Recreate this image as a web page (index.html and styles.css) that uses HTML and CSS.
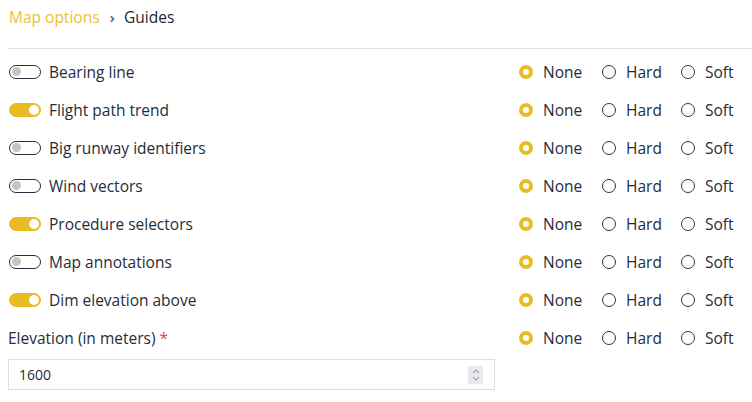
FILE: index.html
```html
<!DOCTYPE html>
<html>
<head>
<meta charset="utf-8">
<link rel="stylesheet" href="styles.css">
</head>
<body>
<nav class="crumbs"><span class="crumb-link">Map options</span><span class="crumb-sep">›</span><span class="crumb-cur">Guides</span></nav>
<hr class="divider">
<div class="list">
  <div class="row">
    <label class="toggle-label"><span class="toggle"></span>Bearing line</label>
    <div class="radios"><span class="opt"><span class="radio on"></span>None</span><span class="opt"><span class="radio"></span>Hard</span><span class="opt"><span class="radio"></span>Soft</span></div>
  </div>
  <div class="row">
    <label class="toggle-label"><span class="toggle active"></span>Flight path trend</label>
    <div class="radios"><span class="opt"><span class="radio on"></span>None</span><span class="opt"><span class="radio"></span>Hard</span><span class="opt"><span class="radio"></span>Soft</span></div>
  </div>
  <div class="row">
    <label class="toggle-label"><span class="toggle"></span>Big runway identifiers</label>
    <div class="radios"><span class="opt"><span class="radio on"></span>None</span><span class="opt"><span class="radio"></span>Hard</span><span class="opt"><span class="radio"></span>Soft</span></div>
  </div>
  <div class="row">
    <label class="toggle-label"><span class="toggle"></span>Wind vectors</label>
    <div class="radios"><span class="opt"><span class="radio on"></span>None</span><span class="opt"><span class="radio"></span>Hard</span><span class="opt"><span class="radio"></span>Soft</span></div>
  </div>
  <div class="row">
    <label class="toggle-label"><span class="toggle active"></span>Procedure selectors</label>
    <div class="radios"><span class="opt"><span class="radio on"></span>None</span><span class="opt"><span class="radio"></span>Hard</span><span class="opt"><span class="radio"></span>Soft</span></div>
  </div>
  <div class="row">
    <label class="toggle-label"><span class="toggle"></span>Map annotations</label>
    <div class="radios"><span class="opt"><span class="radio on"></span>None</span><span class="opt"><span class="radio"></span>Hard</span><span class="opt"><span class="radio"></span>Soft</span></div>
  </div>
  <div class="row">
    <label class="toggle-label"><span class="toggle active"></span>Dim elevation above</label>
    <div class="radios"><span class="opt"><span class="radio on"></span>None</span><span class="opt"><span class="radio"></span>Hard</span><span class="opt"><span class="radio"></span>Soft</span></div>
  </div>
  <div class="row field-row">
    <div class="field">
      <div class="field-label">Elevation (in meters) <span class="req">*</span></div>
      <div class="input"><span class="input-val">1600</span><span class="spin"><svg width="10" height="14" viewBox="0 0 10 14"><path d="M2 5 L5 2 L8 5" fill="none" stroke="#a3a3ad" stroke-width="1.2"/><path d="M2 9 L5 12 L8 9" fill="none" stroke="#a3a3ad" stroke-width="1.2"/></svg></span></div>
    </div>
    <div class="radios"><span class="opt"><span class="radio on"></span>None</span><span class="opt"><span class="radio"></span>Hard</span><span class="opt"><span class="radio"></span>Soft</span></div>
  </div>
</div>
</body>
</html>
```
FILE: styles.css
```css
html, body {
  margin: 0;
  padding: 0;
  background: #ffffff;
}
body {
  padding: 0 8px;
  font-family: "Open Sans", "Noto Sans", sans-serif;
  font-size: 15.5px;
  color: #252d3a;
  width: 736px;
}
.crumbs {
  display: flex;
  align-items: center;
  height: 34px;
  font-size: 15.5px;
  padding-left: 1px;
}
.crumb-link {
  color: #e8c235;
}
.crumb-sep {
  color: #6b7280;
  margin: 0 9px 0 10px;
  font-weight: 700;
  font-size: 15px;
}
.crumb-cur {
  color: #1f2633;
}
.divider {
  border: 0;
  border-top: 1px solid #e2e4e8;
  margin: 14px -8px 0 0;
  height: 0;
}
.list {
  padding-top: 4px;
}
.row {
  display: flex;
  justify-content: space-between;
  align-items: center;
  height: 38px;
}
.toggle-label {
  display: flex;
  align-items: center;
  gap: 8px;
  padding-left: 1px;
}
.toggle {
  position: relative;
  box-sizing: border-box;
  width: 32px;
  height: 14px;
  border: 1.6px solid #243040;
  border-radius: 7px;
  background: #fff;
}
.toggle::after {
  content: "";
  position: absolute;
  top: 1px;
  left: 2px;
  width: 9px;
  height: 9px;
  border-radius: 50%;
  background: #c4c4c4;
}
.toggle.active {
  background: #e8bc25;
  border-color: #e8bc25;
}
.toggle.active::after {
  left: auto;
  right: 1px;
  top: 0.5px;
  width: 10px;
  height: 10px;
  background: #fff;
}
.radios {
  display: flex;
  align-items: center;
  width: 225px;
  margin-right: 0;
}
.opt {
  display: flex;
  align-items: center;
  gap: 10px;
}
.opt:nth-child(1) { width: 83px; }
.opt:nth-child(2) { width: 79px; }
.radio {
  box-sizing: border-box;
  width: 14px;
  height: 14px;
  border-radius: 50%;
  border: 1.3px solid #2b3442;
  background: #fff;
}
.radio.on {
  border: 4px solid #e8bc25;
}
.field-row {
  align-items: flex-start;
  height: auto;
}
.field-row .radios {
  height: 38px;
}
.field {
  display: flex;
  flex-direction: column;
}
.field-label {
  height: 38px;
  display: flex;
  align-items: center;
  gap: 4px;
}
.req {
  color: #ef4444;
}
.input {
  box-sizing: border-box;
  width: 487px;
  height: 31px;
  margin-top: 2px;
  border: 1px solid #dcdde2;
  display: flex;
  align-items: center;
  justify-content: space-between;
  padding: 0 11px 0 10px;
  font-size: 14px;
}
.spin {
  width: 15px;
  height: 18px;
  background: #e8e8ee;
  display: flex;
  align-items: center;
  justify-content: center;
}
```
